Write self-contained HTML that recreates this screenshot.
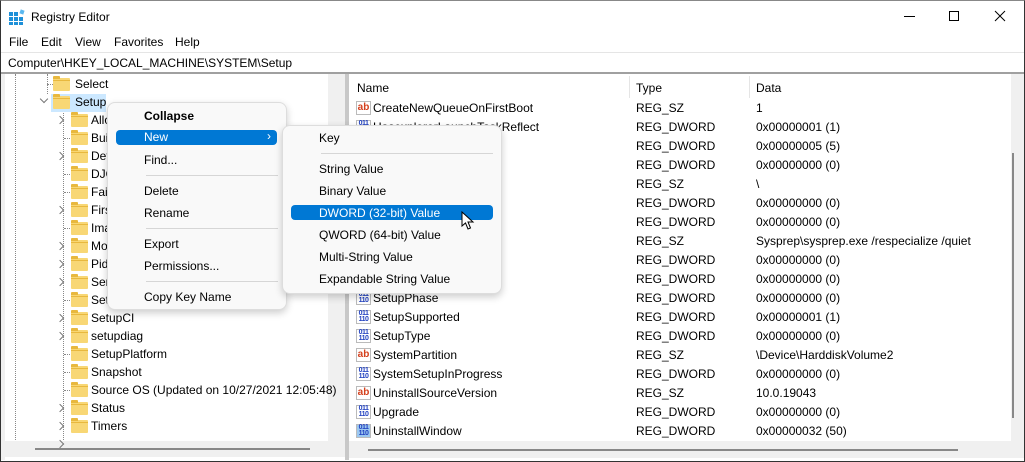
<!DOCTYPE html><html><head><style>
*{margin:0;padding:0;box-sizing:border-box}
body{width:1025px;height:462px;overflow:hidden;background:#fff;font-family:"Liberation Sans",sans-serif;font-size:12px;color:#000;position:relative}
.a{position:absolute;white-space:nowrap}
.win{position:absolute;left:0;top:0;width:1025px;height:462px;border:1px solid #333;border-top-color:#888}
.fold{position:absolute;width:17px;height:13px;background:#f8d775;border-radius:1px}
.fold:before{content:"";position:absolute;left:0;top:-2px;width:7px;height:3px;background:#e8b83e;border-radius:1px 1px 0 0}
.fold:after{content:"";position:absolute;left:0;top:2px;width:17px;height:1px;background:#e8b83e}
.chev{position:absolute;width:6px;height:6px;border-right:1.3px solid #777;border-bottom:1.3px solid #777;transform:rotate(-45deg)}
.dh{position:absolute;height:1px;border-top:1px dotted #888;width:8px}
.menu{position:absolute;background:#f9f9f9;border:1px solid #ddd;border-radius:8px;box-shadow:0 3px 8px rgba(0,0,0,.2)}
.mi{position:absolute;white-space:nowrap;font-size:12px}
.hl{position:absolute;background:#0078d4;border-radius:4px}
.sep{position:absolute;height:1px;background:#d6d6d6}
.ic{position:absolute;width:15px;height:14px;left:356px}
.ab{border:1px solid #bbb;background:#fff;color:#d43f1c;font-weight:bold;font-size:10px;line-height:11px;text-align:center}
.dw{border:1px solid #bbb;background:#fff;color:#2040c0;font-size:7px;line-height:6px;font-weight:bold;text-align:center;letter-spacing:-0.5px}
</style></head><body>
<div class="win"></div>
<!-- title -->
<svg class="a" style="left:9px;top:9px" width="16" height="16"><rect x="0" y="3" width="4" height="4" fill="#1e90d8"/><rect x="5" y="3" width="4" height="4" fill="#1e90d8"/><rect x="0" y="8" width="4" height="4" fill="#1e90d8"/><rect x="5" y="8" width="4" height="4" fill="#1e90d8"/><rect x="10" y="8" width="4" height="4" fill="#1e90d8"/><rect x="0" y="13" width="4" height="3" fill="#1e90d8"/><rect x="5" y="13" width="4" height="3" fill="#1e90d8"/><rect x="10" y="13" width="4" height="3" fill="#1e90d8"/><rect x="11" y="1" width="4" height="4" fill="#5ab8f0" transform="rotate(20 13 3)"/></svg>
<div class="a" style="left:31px;top:10px">Registry Editor</div>
<div class="a" style="left:904px;top:16px;width:11px;height:1px;background:#000"></div>
<div class="a" style="left:949px;top:11px;width:10px;height:10px;border:1px solid #000"></div>
<svg class="a" style="left:994px;top:10px" width="12" height="12"><path d="M1 1L11 11M11 1L1 11" stroke="#000" stroke-width="1"/></svg>
<!-- menu -->
<div class="a" style="left:9px;top:35px">File</div>
<div class="a" style="left:41px;top:35px">Edit</div>
<div class="a" style="left:75px;top:35px">View</div>
<div class="a" style="left:114px;top:35px">Favorites</div>
<div class="a" style="left:175px;top:35px">Help</div>
<div class="a" style="left:1px;top:52px;width:1023px;height:20px;border-top:1px solid #e5e5e5;background:#fff"></div>
<div class="a" style="left:8px;top:56px">Computer\HKEY_LOCAL_MACHINE\SYSTEM\Setup</div>
<div class="a" style="left:1px;top:72px;width:1023px;height:2px;background:#a0a0a0"></div>
<div class="a" style="left:1px;top:74px;width:4px;height:386px;background:#f0f0f0"></div>
<!-- left pane -->
<div class="a" style="left:5px;top:74px;width:340px;height:384px;background:#fff;overflow:hidden">
<div class="a" style="left:10px;top:0;height:370px;border-left:1px dotted #888"></div>
<div class="a" style="left:42px;top:0;height:20px;border-left:1px dotted #888"></div>
<div class="a" style="left:58px;top:36px;height:340px;border-left:1px dotted #888"></div>
<div class="a" style="left:133px;top:0;height:370px;border-left:1px solid #ddd;display:none"></div>
</div>
<div class="a" style="left:328px;top:74px;width:17px;height:367px;background:#f0f0f0"></div>
<div class="a" style="left:332px;top:80px;width:2px;height:290px;background:#999;display:none"></div>
<div class="a" style="left:5px;top:441px;width:340px;height:16px;background:#f0f0f0"></div>
<div class="a" style="left:35px;top:448px;width:275px;height:2px;background:#888"></div>
<div class="a" style="left:345px;top:74px;width:4px;height:386px;background:#c8c8c8"></div>
<div id="tree"></div>
<!-- right pane -->
<div class="a" style="left:349px;top:74px;width:662px;height:367px;background:#fff"></div>
<div class="a" style="left:1011px;top:74px;width:13px;height:367px;background:#f0f0f0"></div>
<div class="a" style="left:1012px;top:153px;width:2px;height:265px;background:#888"></div>
<div class="a" style="left:349px;top:441px;width:675px;height:17px;background:#f0f0f0"></div>
<div class="a" style="left:368px;top:449px;width:590px;height:2px;background:#888"></div>
<div class="a" style="left:629px;top:76px;width:1px;height:22px;background:#e5e5e5"></div>
<div class="a" style="left:749px;top:76px;width:1px;height:22px;background:#e5e5e5"></div>
<div class="a" style="left:357px;top:81px">Name</div>
<div class="a" style="left:636px;top:81px">Type</div>
<div class="a" style="left:756px;top:81px">Data</div>
<div id="rows"></div>
<script>
var t=[["Select",84,53,0,-1],["Setup",102,53,1,1]];
var kids=[["AllowStart",1],["BuildUpdate",0],["DefaultMigration",1],["DJOIN",0],["FailedReason",0],["FirstBoot",1],["ImageState",0],["MoSetup",1],["Pid",1],["Service",1],["SetupActionQueue",0],["SetupCI",1],["setupdiag",1],["SetupPlatform",0],["Snapshot",0],["Source OS (Updated on 10/27/2021 12:05:48)",0],["Status",1],["Timers",1],["Upgrade",1]];
var h="";
h+='<div class="a" style="left:51px;top:94px;width:55px;height:18px;background:#cce8ff"></div>';
h+='<div class="dh" style="left:47px;top:84px"></div>';
h+='<div class="fold" style="left:53px;top:78px"></div><div class="a" style="left:75px;top:77px">Select</div>';
h+='<div class="chev" style="left:41px;top:96px;transform:rotate(45deg)"></div>';
h+='<div class="fold" style="left:53px;top:96px"></div><div class="a" style="left:75px;top:95px">Setup</div>';
kids.forEach(function(k,i){var y=120+i*18;
if(k[1])h+='<div class="chev" style="left:57px;top:'+(y-3)+'px"></div>';else h+='<div class="dh" style="left:64px;top:'+y+'px"></div>';
if(y<440)h+='<div class="fold" style="left:71px;top:'+(y-6)+'px;'+(y>432?'height:'+(440-y+6)+'px':'')+'"></div>';
if(y<434)h+='<div class="a" style="left:91px;top:'+(y-7)+'px">'+k[0]+'</div>';});
document.getElementById("tree").innerHTML=h;
var r=[["CreateNewQueueOnFirstBoot","REG_SZ","1"],["HasexplorerLaunchTaskReflect","REG_DWORD","0x00000001 (1)"],["MiniSetupInProgress","REG_DWORD","0x00000005 (5)"],["OOBEInProgress","REG_DWORD","0x00000000 (0)"],["CmdLine0","REG_SZ","\\"],["RestartSetup","REG_DWORD","0x00000000 (0)"],["SetupAnswer","REG_DWORD","0x00000000 (0)"],["CmdLine","REG_SZ","Sysprep\\sysprep.exe /respecialize /quiet"],["RespecializeCmd","REG_DWORD","0x00000000 (0)"],["SetupFlags","REG_DWORD","0x00000000 (0)"],["SetupPhase","REG_DWORD","0x00000000 (0)"],["SetupSupported","REG_DWORD","0x00000001 (1)"],["SetupType","REG_DWORD","0x00000000 (0)"],["SystemPartition","REG_SZ","\\Device\\HarddiskVolume2"],["SystemSetupInProgress","REG_DWORD","0x00000000 (0)"],["UninstallSourceVersion","REG_SZ","10.0.19043"],["Upgrade","REG_DWORD","0x00000000 (0)"],["UninstallWindow","REG_DWORD","0x00000032 (50)"]];
h="";r.forEach(function(x,i){var y=108+i*19;
if(x[1]=="REG_SZ")h+='<div class="ic ab" style="top:'+(y-7)+'px">ab</div>';else h+='<div class="ic dw" style="top:'+(y-7)+'px;'+(i==17?'background:#9cc8f0':'')+'">011<br>110</div>';
h+='<div class="a" style="left:373px;top:'+(y-7)+'px">'+x[0]+'</div><div class="a" style="left:636px;top:'+(y-7)+'px">'+x[1]+'</div><div class="a" style="left:756px;top:'+(y-7)+'px">'+x[2]+'</div>';});
document.getElementById("rows").innerHTML=h;
</script>
<!-- context menu -->
<div class="menu" style="left:107px;top:102px;width:180px;height:208px"></div>
<div class="hl" style="left:116px;top:130px;width:161px;height:15px"></div>
<div class="mi" style="left:144px;top:109px;font-weight:bold">Collapse</div>
<div class="mi" style="left:144px;top:130px;color:#fff">New</div>
<div class="mi" style="left:267px;top:129px;color:#fff">›</div>
<div class="mi" style="left:144px;top:153px">Find...</div>
<div class="sep" style="left:146px;top:175px;width:132px"></div>
<div class="mi" style="left:144px;top:184px">Delete</div>
<div class="mi" style="left:144px;top:206px">Rename</div>
<div class="sep" style="left:146px;top:228px;width:132px"></div>
<div class="mi" style="left:144px;top:237px">Export</div>
<div class="mi" style="left:144px;top:259px">Permissions...</div>
<div class="sep" style="left:146px;top:281px;width:132px"></div>
<div class="mi" style="left:144px;top:290px">Copy Key Name</div>
<!-- submenu -->
<div class="menu" style="left:282px;top:125px;width:220px;height:169px"></div>
<div class="hl" style="left:291px;top:205px;width:202px;height:15px"></div>
<div class="mi" style="left:319px;top:131px">Key</div>
<div class="sep" style="left:321px;top:153px;width:172px"></div>
<div class="mi" style="left:319px;top:162px">String Value</div>
<div class="mi" style="left:319px;top:184px">Binary Value</div>
<div class="mi" style="left:319px;top:206px;color:#fff">DWORD (32-bit) Value</div>
<div class="mi" style="left:319px;top:228px">QWORD (64-bit) Value</div>
<div class="mi" style="left:319px;top:250px">Multi-String Value</div>
<div class="mi" style="left:319px;top:272px">Expandable String Value</div>
<svg class="a" style="left:461px;top:211px" width="14" height="20"><path d="M1 1L1 15L4.5 12L7 18L9.5 17L7 11L12 11Z" fill="#fff" stroke="#000" stroke-width="1"/></svg>
</body></html>
